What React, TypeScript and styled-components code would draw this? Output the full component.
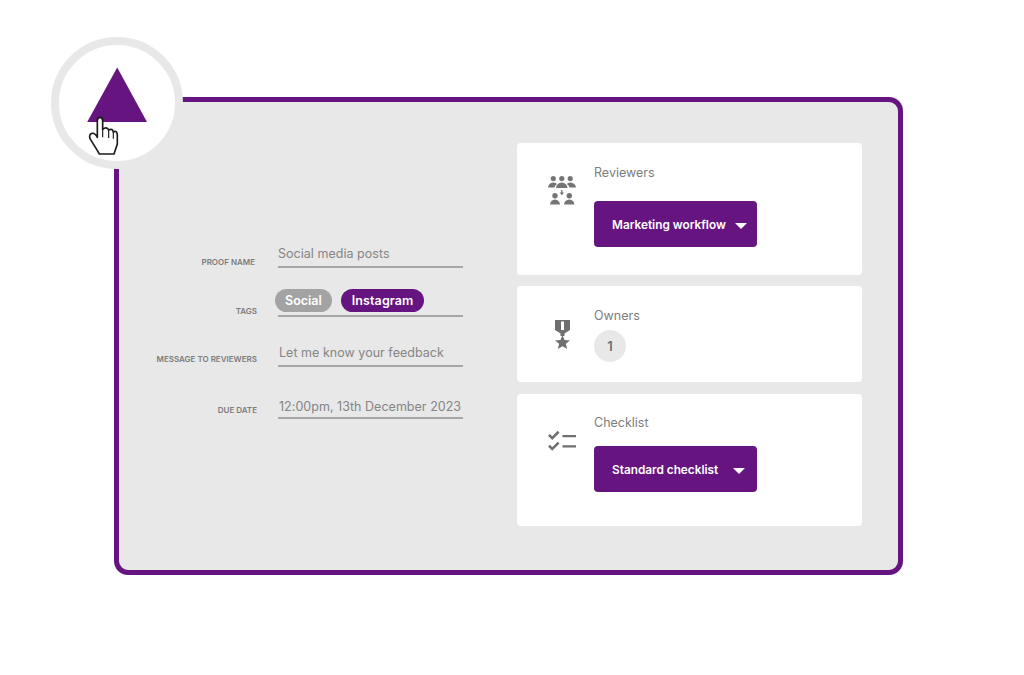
import React from 'react';
import styled, { createGlobalStyle } from 'styled-components';

const purple = '#651480';

const Global = createGlobalStyle`
  html, body { margin: 0; padding: 0; background: #fff; }
  body { font-family: "Inter", "Liberation Sans", sans-serif; }
`;

const Page = styled.div`
  width: 1024px;
  height: 675px;
  overflow: hidden;
  padding: 97px 0 0 114px;
  box-sizing: border-box;
`;

const Panel = styled.div`
  position: relative;
  width: 789px;
  height: 478px;
  box-sizing: border-box;
  background: #e8e8e8;
  border: 5px solid ${purple};
  border-radius: 14px;
  padding: 41px 36px 0 31px;
  display: flex;
  justify-content: space-between;
`;

const Badge = styled.div`
  position: absolute;
  left: -68px;
  top: -65px;
  width: 132px;
  height: 132px;
  box-sizing: border-box;
  border: 8px solid #e8e8e8;
  border-radius: 50%;
  background: #fff;
`;

const BadgeArt = styled.svg`
  position: absolute;
  left: -8px;
  top: -8px;
`;

const Form = styled.div`
  width: 313px;
  padding-top: 83px;
  display: flex;
  flex-direction: column;
`;

const Row = styled.div<{ $h: number }>`
  height: ${p => p.$h}px;
  display: flex;
  align-items: flex-end;
  justify-content: flex-end;
  gap: 21px;
`;

const Label = styled.div<{ $up: number; $right?: number }>`
  font-size: 8px;
  font-weight: 600;
  color: #7c7c7c;
  white-space: nowrap;
  margin-bottom: ${p => p.$up}px;
  margin-right: ${p => p.$right ?? 0}px;
`;

const Field = styled.div<{ $top: number; $left?: number }>`
  width: 185px;
  height: 26px;
  box-sizing: border-box;
  border-bottom: 2px solid #a6a6a6;
  padding: ${p => p.$top}px 0 0 ${p => p.$left ?? 0}px;
  font-size: 12.5px;
  line-height: 18px;
  letter-spacing: 0.03px;
  color: #858585;
  white-space: nowrap;
`;

const Tags = styled.div`
  width: 185px;
  height: 28px;
  box-sizing: border-box;
  border-bottom: 2px solid #a6a6a6;
  display: flex;
  gap: 9px;
`;

const Tag = styled.span<{ $on?: boolean }>`
  height: 23px;
  margin-left: ${p => (p.$on ? 0 : -3)}px;
  padding: 0 ${p => (p.$on ? 11 : 10)}px;
  border-radius: 12px;
  background: ${p => (p.$on ? purple : '#a3a3a3')};
  color: #fff;
  font-size: 12.5px;
  font-weight: 600;
  letter-spacing: ${p => (p.$on ? 0.1 : 0)}px;
  line-height: 23px;
`;

const Cards = styled.div`
  width: 345px;
  display: flex;
  flex-direction: column;
`;

const Card = styled.div<{ $h: number; $top: number; $pad: number }>`
  height: ${p => p.$h}px;
  margin-top: ${p => p.$top}px;
  box-sizing: border-box;
  background: #fff;
  border-radius: 4px;
  padding: ${p => p.$pad}px 0 0 31px;
  display: flex;
  gap: 18px;
`;

const IconSlot = styled.div<{ $top: number }>`
  width: 28px;
  padding-top: ${p => p.$top}px;
  display: flex;
  justify-content: center;
  align-items: flex-start;
`;

const Body = styled.div<{ $gap: number }>`
  display: flex;
  flex-direction: column;
  align-items: flex-start;
  gap: ${p => p.$gap}px;
`;

const Title = styled.div`
  font-size: 12.5px;
  line-height: 16px;
  color: #7d7d7d;
`;

const Select = styled.div<{ $right: number; $left: number }>`
  width: 163px;
  height: 46px;
  box-sizing: border-box;
  background: ${purple};
  border-radius: 4px;
  padding: 2px ${p => p.$right}px 0 ${p => p.$left}px;
  display: flex;
  align-items: center;
  justify-content: space-between;
  color: #fff;
  font-size: 11.8px;
  font-weight: 600;
  white-space: nowrap;
`;

const Caret = styled.span`
  width: 0;
  height: 0;
  border-left: 6px solid transparent;
  border-right: 6px solid transparent;
  border-top: 6.5px solid #fff;
  margin-top: 1px;
`;

const Count = styled.div`
  width: 32px;
  height: 32px;
  border-radius: 50%;
  background: #e8e8e8;
  color: #6f6f6f;
  font-size: 13px;
  font-weight: 600;
  display: flex;
  align-items: center;
  justify-content: center;
`;

const Art = () => (
  <BadgeArt width="132" height="132" viewBox="51 37 132 132">
    <polygon points="117.2,67.5 87.2,122 147,122" fill="#651480" />
    <g transform="translate(40 30) scale(0.3333)">
      <path
        d="M172 272 Q172 262 180 262 Q188 262 188 272 L188 298 Q200 288 206 300 Q218 294 220 306 Q232 300 232 316 L232 342 L222 372 L178 372 L170 358 L150 326 Q146 312 156 310 Q165 308 172 322 Z"
        fill="#fff"
        stroke="#1c1c1c"
        strokeWidth="5"
        strokeLinejoin="round"
      />
      <path d="M188 296 V322 M206 300 V324 M220 306 V326" fill="none" stroke="#1c1c1c" strokeWidth="3.5" />
    </g>
  </BadgeArt>
);

const ReviewersIcon = () => (
  <svg width="28" height="29" viewBox="0 0 28 29" fill="#757575">
    <circle cx="5.3" cy="2.6" r="2.6" />
    <circle cx="13.8" cy="2.6" r="2.6" />
    <circle cx="22.2" cy="2.6" r="2.6" />
    <path d="M0 11.5 Q.5 7 5.3 6.5 Q8 6.6 9 8 Q7 9 6.5 11.5 Z" />
    <path d="M8 12 Q8.5 7 13.8 6.5 Q19 7 19.6 12 Z" />
    <path d="M28 11.5 Q27.5 7 22.2 6.5 Q20 6.6 18.8 8 Q21 9 21.5 11.5 Z" />
    <circle cx="7" cy="19.8" r="2.7" />
    <circle cx="21.3" cy="19.8" r="2.7" />
    <path d="M2 28.6 Q2.5 24 7 23.6 Q11.5 24 12 28.6 Z" />
    <path d="M16 28.6 Q16.5 24 21.3 23.6 Q26 24 26.5 28.6 Z" />
    <path d="M13.2 14 h1.3 v2.6 h1.6 l-2.25 2.6 l-2.25 -2.6 h1.6 Z" />
  </svg>
);

const MedalIcon = () => (
  <svg width="15" height="29" viewBox="0 0 15 29" fill="#6f6f6f">
    <path fillRule="evenodd" d="M0 0 H15 V10 L9.5 13.5 V16 H5.5 V13.5 L0 10 Z M6 1.5 V10 H9 V1.5 Z" />
    <path d="M7.5 15 L9.5 20 L15 20.4 L10.8 23.8 L12.2 29 L7.5 26.2 L2.8 29 L4.2 23.8 L0 20.4 L5.5 20 Z" />
  </svg>
);

const ChecklistIcon = () => (
  <svg width="29" height="23" viewBox="0 0 29 23" fill="none" stroke="#6f6f6f">
    <path d="M1 4.6 L4.4 8 L11 1.4" strokeWidth="2.6" />
    <path d="M1 15.8 L4.4 19.2 L11 12.6" strokeWidth="2.6" />
    <path d="M15 6 H29 M15 16.5 H29" strokeWidth="2.4" />
  </svg>
);

export default function App() {
  return (
    <Page>
      <Global />
      <Panel>
        <Badge>
          <Art />
        </Badge>
        <Form>
          <Row $h={42}>
            <Label $up={1} $right={2}>PROOF NAME</Label>
            <Field $top={3}>Social media posts</Field>
          </Row>
          <Row $h={48.5}>
            <Label $up={1}>TAGS</Label>
            <Tags>
              <Tag>Social</Tag>
              <Tag $on>Instagram</Tag>
            </Tags>
          </Row>
          <Row $h={50.5}>
            <Label $up={3}>MESSAGE TO REVIEWERS</Label>
            <Field $top={3} $left={1}>Let me know your feedback</Field>
          </Row>
          <Row $h={52}>
            <Label $up={4}>DUE DATE</Label>
            <Field $top={5} $left={1}>12:00pm, 13th December 2023</Field>
          </Row>
        </Form>
        <Cards>
          <Card $h={132} $top={0} $pad={22}>
            <IconSlot $top={11}>
              <ReviewersIcon />
            </IconSlot>
            <Body $gap={20}>
              <Title>Reviewers</Title>
              <Select $left={18} $right={10}>
                Marketing workflow
                <Caret />
              </Select>
            </Body>
          </Card>
          <Card $h={96} $top={11} $pad={22}>
            <IconSlot $top={12}>
              <MedalIcon />
            </IconSlot>
            <Body $gap={6}>
              <Title>Owners</Title>
              <Count>1</Count>
            </Body>
          </Card>
          <Card $h={132} $top={12} $pad={21}>
            <IconSlot $top={15}>
              <ChecklistIcon />
            </IconSlot>
            <Body $gap={15}>
              <Title>Checklist</Title>
              <Select $left={18} $right={12}>
                Standard checklist
                <Caret />
              </Select>
            </Body>
          </Card>
        </Cards>
      </Panel>
    </Page>
  );
}
